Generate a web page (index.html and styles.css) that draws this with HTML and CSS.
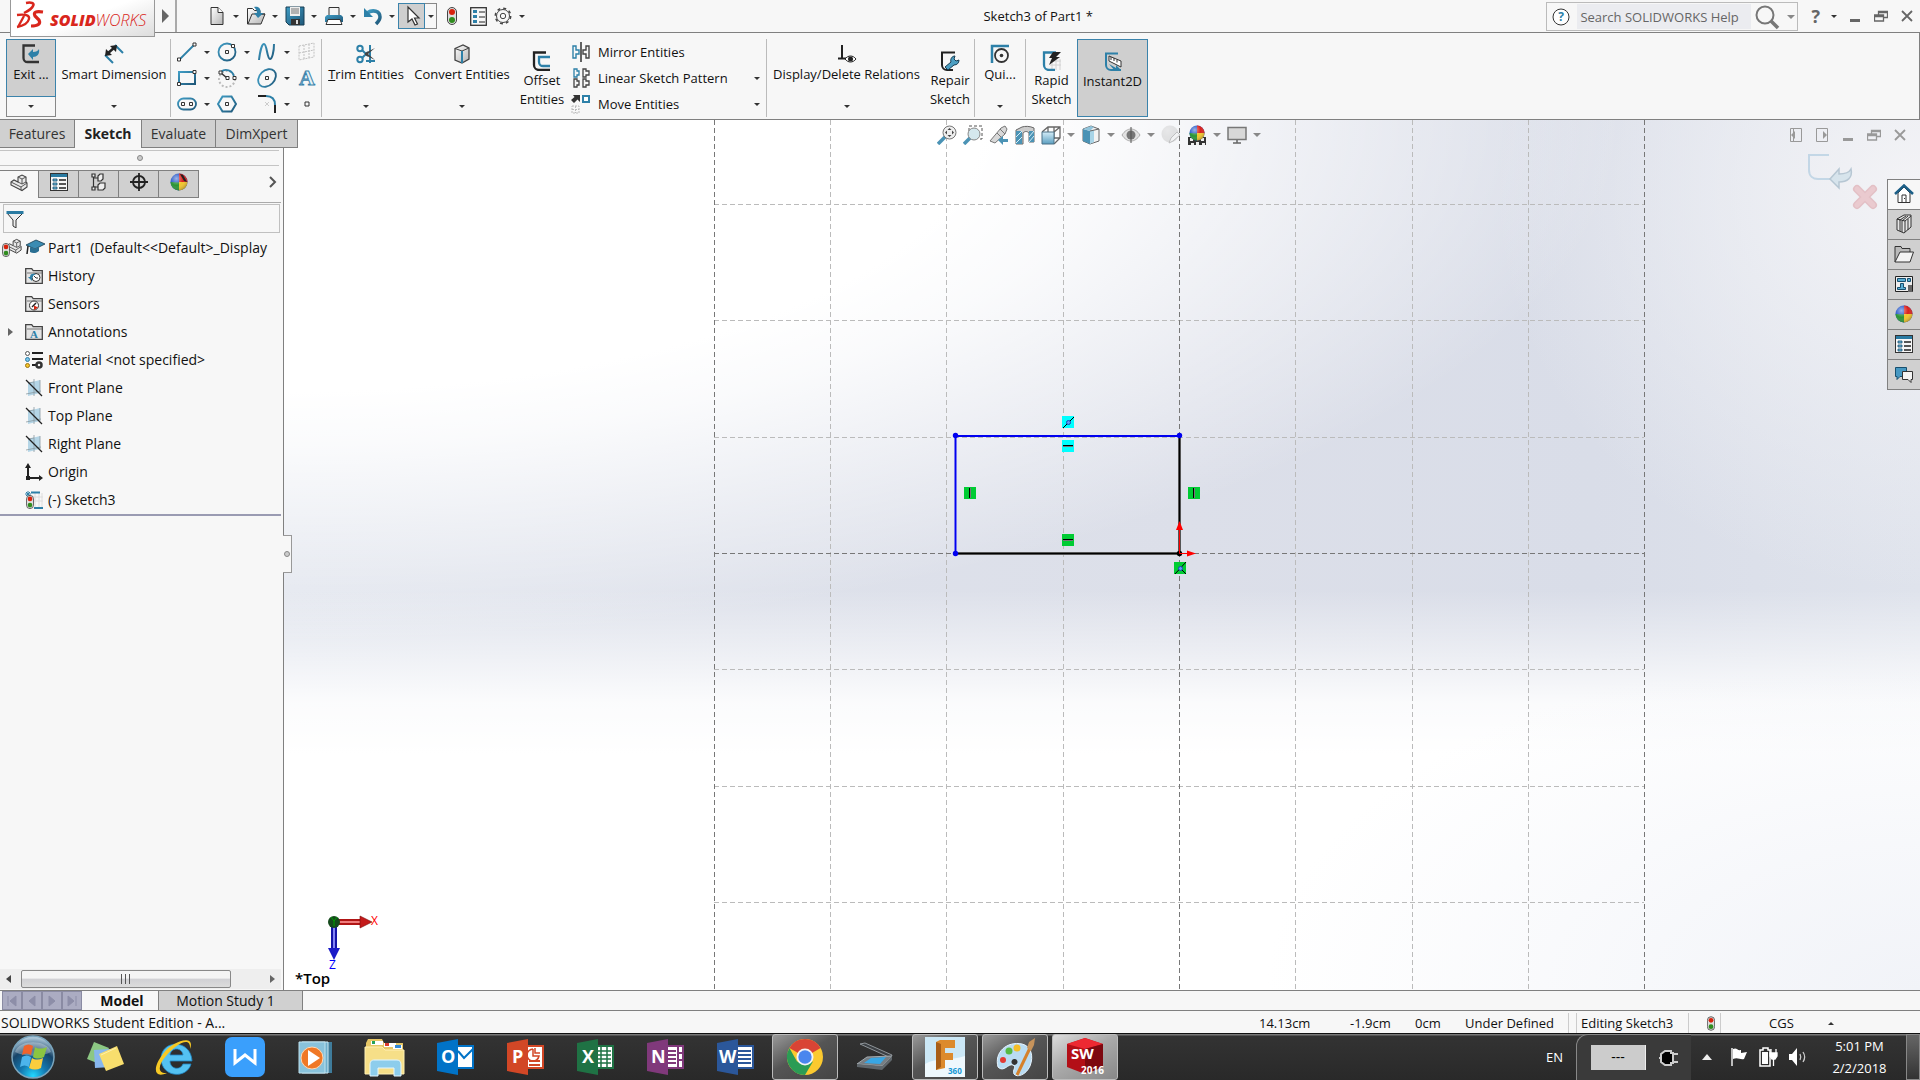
FILE: index.html
```html
<!DOCTYPE html>
<html lang="en">
<head>
    <meta charset="UTF-8">
    <meta name="viewport" content="width=device-width, initial-scale=1.0">
    <title>Sketch3 of Part1 *</title>
    <link rel="stylesheet" href="styles.css">
</head>
<body>
<!-- shared icons -->
<svg class="defs" aria-hidden="true">
    <defs>
        <linearGradient id="steel" x1="0" y1="0" x2="1" y2="1"><stop offset="0" stop-color="#3f9cc4"/><stop offset="1" stop-color="#1f587a"/></linearGradient>
        <linearGradient id="grey" x1="0" y1="0" x2="1" y2="1"><stop offset="0" stop-color="#ffffff"/><stop offset="1" stop-color="#b4b4b4"/></linearGradient>
        <linearGradient id="glass" x1="0" y1="0" x2="0" y2="1"><stop offset="0" stop-color="#d4edf8"/><stop offset="1" stop-color="#5b9fc0"/></linearGradient>
        <radialGradient id="orb" cx=".5" cy=".95" r=".9"><stop offset="0" stop-color="#22d8ff"/><stop offset=".35" stop-color="#1478b0"/><stop offset=".7" stop-color="#174468"/><stop offset="1" stop-color="#a9c4d6"/></radialGradient>
        <radialGradient id="shade" cx=".35" cy=".3" r=".8"><stop offset="0" stop-color="#fff" stop-opacity=".55"/><stop offset=".5" stop-color="#fff" stop-opacity="0"/><stop offset="1" stop-color="#000" stop-opacity=".35"/></radialGradient>
    </defs>
    <symbol id="i-traffic" viewBox="0 0 10 18"><rect x=".5" y=".5" width="9" height="17" rx="4.500" fill="#ddd" stroke="#444"/><circle cx="5" cy="5" r="3" fill="#d8230d"/><circle cx="5" cy="13" r="3" fill="#2f8c1e"/></symbol>
    <symbol id="i-list" viewBox="0 0 18 18"><rect x=".5" y=".5" width="17" height="17" fill="#f7f7f7" stroke="#333"/><path d="M1 1h16v3H1z" fill="#2a7ba2"/><path d="M3 6h4v2H3zM3 10h4v2H3zM3 14h4v2H3z" fill="#6db6d8" stroke="#174f6e" stroke-width=".8"/><path d="M9 7h7M9 11h7M9 15h7" stroke="#222" stroke-width="1.300"/></symbol>
    <symbol id="i-ball" viewBox="0 0 18 18"><circle cx="9" cy="9" r="8.500" fill="#2456c8"/><path d="M9 .5A8.500 8.500 0 0 1 17.500 9L9 9.500z" fill="#d8211d"/><path d="M17.500 9A8.500 8.500 0 0 1 9 17.500V9z" fill="#f2c52a"/><path d="M9 17.500A8.500 8.500 0 0 1 .5 9L9 9.500z" fill="#2a9435"/><circle cx="9" cy="9" r="8.500" fill="url(#shade)"/></symbol>
    <symbol id="i-folder" viewBox="0 0 18 18"><path d="M.7 16.300V1.700h6l1.500 2h9.100v12.600z" fill="#e4e4e4" stroke="#444" stroke-width="1.300"/><path d="M2 6h15" stroke="#777"/></symbol>
    <symbol id="i-plane" viewBox="0 0 18 18"><path d="M3 4l12-3v13L3 17z" fill="#b4d5e6"/><path d="M3 4l6-1M9 0v17M15 1v13M1 15l15-3" stroke="#8a9aa2" stroke-width=".8"/><path d="M1 1l16 16" stroke="#222" stroke-width="1.300"/></symbol>
    <symbol id="i-part" viewBox="0 0 18 18"><path d="M1 8l3-2 4 2V3l4-2 4 2v5l1 1v4l-5 3.500L1 11z" fill="#e9e9e9" stroke="#444" stroke-width="1.100"/><path d="M8 3l4 2 4-2M12 5v5l4-2M8 8l4 2M1 8l10 5 6-4M11 13v3" fill="none" stroke="#555"/></symbol>
    <symbol id="i-min" viewBox="0 0 14 14"><path d="M2 10h10v3H2z" fill="currentColor"/></symbol>
    <symbol id="i-restore" viewBox="0 0 14 14"><path d="M4.500 7V2.500h9v6H10M.5 6h9v6h-9zM4.500 3.500h9M.5 7.500h9" fill="none" stroke="currentColor" stroke-width="1.300"/></symbol>
    <symbol id="i-close" viewBox="0 0 14 14"><path d="M2 2l10 10M12 2L2 12" stroke="currentColor" stroke-width="1.800"/></symbol>
    <symbol id="i-office" viewBox="0 0 38 38"><path d="M20 8h17v22H20z" fill="#fff" stroke="currentColor" stroke-width="2"/><path d="M1 5L22 1v36L1 33z" fill="currentColor"/></symbol>
</svg>

<header class="titlebar">
    <div class="brand">
        <svg width="28" height="28" viewBox="0 0 28 28" fill="none" stroke="#d9261c"><path d="M10 2c5-1 9 0 7 3-1 3-5 5-9 7" stroke-width="2.500"/><path d="M1 14c8-1 13 0 12 4-1 4-6 7-12 8M8 15L2 26" stroke-width="2.300"/><path d="M27 11c-7-1-10 0-8 4l4 4c2 4-1 6-8 6" stroke-width="3.200"/></svg>
        <span class="brand-name"><b>SOLID</b>WORKS</span>
    </div>
    <button class="brand-more" aria-label="Show menus"><i class="tri-right"></i></button>
    <nav class="quick">
        <button aria-label="New"><svg width="18" height="20" viewBox="0 0 18 20"><path d="M3 1.500h7l5 5v12H3z" fill="url(#grey)" stroke="#333"/><path d="M10 1.500v5h5" fill="#fff" stroke="#333"/></svg></button><i class="caret"></i>
        <button aria-label="Open"><svg width="20" height="20" viewBox="0 0 20 20"><path d="M1.500 18V2.500h5l2 2H14V8h5l-4 10z" fill="url(#grey)" stroke="#333"/><path d="M2 18L6 8h13" fill="none" stroke="#333"/><path d="M8 1c5-1 7 2 6.500 6h3L12 12 8 7h3c0-2-1-4-3-6z" fill="#2d80a8"/></svg></button><i class="caret"></i>
        <button aria-label="Save"><svg width="20" height="20" viewBox="0 0 20 20"><path d="M1 1h18v18H4l-3-3z" fill="url(#steel)" stroke="#173d52"/><path d="M5 1h10v9H5z" fill="#eee"/><path d="M6 3h8M6 5h8M6 7h8" stroke="#777"/><path d="M6 13h9v6H6z" fill="#333"/><path d="M11 14h2v4h-2z" fill="#ddd"/></svg></button><i class="caret"></i>
        <button aria-label="Print"><svg width="20" height="20" viewBox="0 0 20 20"><path d="M5 9V1.500h10V9" fill="#f4f4f4" stroke="#333"/><path d="M1 11l2-2h14l2 2v5H1z" fill="url(#steel)"/><path d="M4 13.500h12l2 5H2z" fill="#fff" stroke="#333"/></svg></button><i class="caret"></i>
        <button aria-label="Undo"><svg width="20" height="20" viewBox="0 0 20 20"><path d="M4 7c6-4 13-2 13 4 0 3-2 5-4 7" fill="none" stroke="url(#steel)" stroke-width="3.500"/><path d="M1 2v9h9z" fill="#2d80a8"/></svg></button><i class="caret"></i>
        <button class="selected" aria-label="Select"><svg width="24" height="24" viewBox="0 0 24 24"><path d="M8 3v15l4-3 3 6 2.500-1-3-6h4.500z" fill="#fff" stroke="#333" stroke-width="1.200"/></svg></button><button class="drop" aria-label="Select options"><i class="caret"></i></button>
        <button class="wide" aria-label="Rebuild"><svg width="10" height="18"><use href="#i-traffic"/></svg></button>
        <button class="wide" aria-label="File properties"><svg width="17" height="19" viewBox="0 0 17 19"><rect x=".7" y=".7" width="15.600" height="17.600" fill="#f7f7f7" stroke="#333" stroke-width="1.300"/><path d="M3 3h4v3H3zM3 8h4v3H3zM3 13h4v3H3z" fill="#2d80a8"/><path d="M9 5h6M9 10h6M9 15h6" stroke="#222"/></svg></button>
        <button aria-label="Options"><svg width="18" height="18" viewBox="0 0 18 18" fill="none" stroke="#444"><circle cx="9" cy="9" r="7.700" stroke-width="1.500" stroke-dasharray="3 3.050"/><circle cx="9" cy="9" r="6.500"/><circle cx="9" cy="9" r="2.700"/></svg></button><i class="caret"></i>
    </nav>
    <h1 class="doc-title">Sketch3 of Part1 *</h1>
    <div class="search">
        <svg width="18" height="18" viewBox="0 0 18 18"><circle cx="9" cy="9" r="8" fill="#fff" stroke="#333"/><text x="9" y="13" text-anchor="middle" class="q-small">?</text></svg>
        <input type="text" placeholder="Search SOLIDWORKS Help" aria-label="Search SOLIDWORKS Help">
        <button aria-label="Search"><svg width="26" height="26" viewBox="0 0 26 26" fill="none" stroke="#777"><circle cx="11" cy="11" r="8.500" stroke-width="2"/><path d="M17 17l7 7" stroke-width="3.500"/></svg></button>
        <i class="caret pale"></i>
    </div>
    <div class="win-controls">
        <button class="help" aria-label="Help">?</button><i class="caret"></i>
        <button aria-label="Minimize"><svg width="14" height="14"><use href="#i-min"/></svg></button>
        <button aria-label="Restore"><svg width="14" height="14"><use href="#i-restore"/></svg></button>
        <button aria-label="Close"><svg width="14" height="14"><use href="#i-close"/></svg></button>
    </div>
</header>

<section class="ribbon">
    <div class="exit">
        <button class="exit-main"><svg width="20" height="20" viewBox="0 0 20 20"><path d="M14 1.500H2.500V14a4 4 0 0 0 4 4H18" fill="none" stroke="#333" stroke-width="2.300"/><path d="M7 10l5-5v3c3 0 5-1 6-3 1 5-2 8-6 8v3z" fill="#2d80a8"/></svg>Exit ...</button>
        <button class="exit-drop" aria-label="Exit options"><i class="caret"></i></button>
    </div>
    <button class="tool smart"><svg width="20" height="20" viewBox="0 0 20 20"><path d="M11 1l8 8M1 11l8 8" fill="none" stroke="#2d80a8" stroke-width="2"/><path d="M3 10l8-7" stroke="#222" stroke-width="2.500"/><path d="M1 12l1-7 6 6zM13 1L6 2l6 6z" fill="#222"/></svg>Smart Dimension<i class="caret"></i></button>
    <div class="sketch-tools">
        <button aria-label="Line"><svg width="20" height="20" viewBox="0 0 20 20" fill="#fff" stroke="#333"><path d="M3 17L17 3" stroke="#2d80a8" stroke-width="1.800"/><path d="M.5 16h3v3h-3zM16 1h3v3h-3z"/></svg></button><i class="caret"></i>
        <button aria-label="Circle"><svg width="20" height="20" viewBox="0 0 20 20" fill="none" stroke="#333"><circle cx="10" cy="10" r="8.500" stroke="url(#steel)" stroke-width="1.800"/><path d="M8.500 8.500h3v3h-3z"/><path d="M14.500 2.500h3v3h-3z" fill="#fff"/></svg></button><i class="caret"></i>
        <button aria-label="Spline"><svg width="20" height="20" viewBox="0 0 20 20" fill="none"><path d="M2 18C3 9 5 2 7 2c3 0 3 15 6 15 2 0 4-7 4-15" stroke="url(#steel)" stroke-width="2"/></svg></button><i class="caret"></i>
        <button aria-label="Sketch plane"><svg width="20" height="20" viewBox="0 0 20 20" fill="none" stroke="#c2c2c2" stroke-dasharray="2 1"><path d="M2 4l15-3v14L2 18zM7 3v14M12 2v14M2 11l15-3"/></svg></button>
        <button aria-label="Rectangle"><svg width="20" height="20" viewBox="0 0 20 20" fill="#fff" stroke="#333"><path d="M2 4h16v12H2z" fill="none" stroke="url(#steel)" stroke-width="2"/><path d="M.5 14.500h3v3h-3zM16 2.500h3v3h-3z"/></svg></button><i class="caret"></i>
        <button aria-label="Arc"><svg width="20" height="20" viewBox="0 0 20 20" fill="#fff" stroke="#333"><circle cx="10" cy="11" r="8" fill="none" stroke="#bbb" stroke-width="2" stroke-dasharray="2 2"/><path d="M4 4c4-4 12-2 13 5" fill="none" stroke="#2d80a8" stroke-width="1.800"/><path d="M4 5l6 5" stroke-width="1.500"/><path d="M2 3h3v3H2zM9 8.500h3v3H9zM16 8.500h3v3h-3z"/></svg></button><i class="caret"></i>
        <button aria-label="Ellipse"><svg width="20" height="20" viewBox="0 0 20 20" fill="none"><ellipse cx="10" cy="10" rx="10" ry="7.500" transform="rotate(-45 10 10)" stroke="url(#steel)" stroke-width="1.800"/><path d="M8.500 8.500h3v3h-3z" stroke="#333"/></svg></button><i class="caret"></i>
        <button class="letter" aria-label="Text">A</button>
        <button aria-label="Slot"><svg width="20" height="20" viewBox="0 0 20 20" fill="none"><rect x="1" y="4.500" width="18" height="11" rx="5.500" stroke="url(#steel)" stroke-width="1.800"/><path d="M4.500 8.500h3v3h-3zM12.500 8.500h3v3h-3z" stroke="#333"/></svg></button><i class="caret"></i>
        <button aria-label="Polygon"><svg width="20" height="20" viewBox="0 0 20 20" fill="none"><path d="M5.500 2.500h9L19 10l-4.500 7.500h-9L1 10z" stroke="url(#steel)" stroke-width="2"/><path d="M8.500 8.500h3v3h-3z" stroke="#333"/></svg></button><i></i>
        <button aria-label="Fillet"><svg width="20" height="20" viewBox="0 0 20 20" fill="none" stroke-width="2"><path d="M1 2h8M18 11v8" stroke="#222"/><path d="M9 2c6 0 9 3 9 9" stroke="#2d80a8"/><path d="M8 8l4 4M12 8l-4 4" stroke="#ccc" stroke-width="1"/></svg></button><i class="caret"></i>
        <button aria-label="Point"><svg width="20" height="20" viewBox="0 0 20 20"><path d="M8 8h4v4H8z" fill="none" stroke="#333"/></svg></button>
    </div>
    <button class="tool trim"><svg width="20" height="20" viewBox="0 0 20 20"><g fill="none" stroke="#2d80a8" stroke-width="2"><circle cx="4" cy="4.500" r="2.700"/><circle cx="4" cy="15.500" r="2.700"/><path d="M6 6l6 6M6 14l6-6M14 1v18M10 17h9"/></g><path d="M9 9l10-5-7 6 7 6-10-5z" fill="#444"/></svg><span><u>T</u>rim Entities</span><i class="caret"></i></button>
    <button class="tool convert"><svg width="20" height="20" viewBox="0 0 20 20"><path d="M3 4.500L11 1l6 3v11l-7 4-7-3z" fill="url(#grey)" stroke="#444" stroke-width="1.300"/><path d="M3 4.500L10 7l7-3" fill="none" stroke="#444"/><path d="M10 7v12" stroke="#2d80a8" stroke-width="2"/></svg>Convert Entities<i class="caret"></i></button>
    <button class="tool low offset"><svg width="20" height="20" viewBox="0 0 20 20" fill="none" stroke-width="2.300"><path d="M14 1.500H2V14a5 5 0 0 0 5 5h11" stroke="#222"/><path d="M18 6H7v5a4 4 0 0 0 4 4h7" stroke="#2d80a8"/></svg>Offset<br>Entities</button>
    <div class="stack">
        <button><svg width="20" height="20" viewBox="0 0 20 20" fill="none" stroke-width="1.400"><path d="M2 4h3v4h3v4H5v4H2z" stroke="#2d80a8"/><path d="M18 4h-3v4h-3v4h3v4h3z" stroke="#444"/><path d="M10 0v20" stroke="#222"/></svg>Mirror Entities</button>
        <button><svg width="20" height="20" viewBox="0 0 20 20" fill="none" stroke="#444" stroke-width="1.300"><path d="M3 1h3v2h2v4H6v2H3z" stroke="#2d80a8"/><path d="M12 1h3v2h3v4h-3v2h-3zM3 11h3v2h2v4H6v2H3zM12 11h3v2h3v4h-3v2h-3z"/></svg>Linear Sketch Pattern<i class="caret"></i></button>
        <button><svg width="20" height="20" viewBox="0 0 20 20"><path d="M2 1h7v7L6.500 5.500 3 9 0 6l3.500-3z" fill="#333"/><path d="M12 2h6v6h-6z" fill="#fff" stroke="#2d80a8" stroke-width="2"/><path d="M1 12h7v7H1zM1 15.500h7M4.500 12v7" fill="none" stroke="#bbb" stroke-dasharray="2 1"/></svg>Move Entities<i class="caret"></i></button>
    </div>
    <button class="tool display"><svg width="20" height="20" viewBox="0 0 20 20"><path d="M5 1v13M1 14.500h10" stroke="#222" stroke-width="2"/><path d="M8 15c3-4 8-4 11 0-3 4-8 4-11 0z" fill="#fff" stroke="#222"/><circle cx="13.500" cy="15" r="2.500" fill="#222"/></svg>Display/Delete Relations<i class="caret"></i></button>
    <button class="tool low repair"><svg width="20" height="20" viewBox="0 0 20 20"><path d="M15 1.500H2V14a5 5 0 0 0 5 5h6" fill="none" stroke="#222" stroke-width="2"/><path d="M5 16l6-5c-1-3 1-6 4-6l-1 3 2 2 3-1c0 3-2 5-5 5l-6 5z" fill="#4c9fc3" stroke="#173d52"/></svg>Repair<br>Sketch</button>
    <button class="tool quick-snaps"><svg width="20" height="20" viewBox="0 0 20 20" fill="none"><path d="M2 19V2h17" stroke="#2d80a8" stroke-width="2.500"/><circle cx="11.500" cy="11.500" r="6.500" stroke="#333" stroke-width="1.800"/><circle cx="11.500" cy="11.500" r="1.800" fill="#333"/></svg>Qui...<i class="caret"></i></button>
    <button class="tool low rapid"><svg width="20" height="20" viewBox="0 0 20 20"><path d="M8 10h11M8 14h11M10 8v11M14 8v11M18 8v11" stroke="#d2d2d2"/><path d="M14 1.500H2V14a5 5 0 0 0 5 5h6" fill="none" stroke="#2d80a8" stroke-width="2.300"/><path d="M11 1h8l-5 5h4L7 14l3-7H7z" fill="#222"/></svg>Rapid<br>Sketch</button>
    <button class="tool low instant"><svg width="20" height="20" viewBox="0 0 20 20"><path d="M15 1.500H3V13a5 5 0 0 0 5 5h10" fill="none" stroke="#2d80a8" stroke-width="2"/><path d="M6 4l12 5v6L6 9z" fill="#fff" stroke="#333"/><path d="M8 5v3M11 6v3M14 7.500v3" stroke="#333"/><path d="M6 12l7 4v-3l5 5-6 1" fill="#2d80a8"/></svg>Instant2D</button>
</section>

<main class="work">
    <aside class="side">
        <div class="cmd-tabs">
            <button class="t-features">Features</button><button class="active t-sketch">Sketch</button><button class="t-evaluate">Evaluate</button><button class="t-dim">DimXpert</button>
        </div>
        <div class="panel">
            <div class="grip"><i></i></div>
            <div class="panel-tabs">
                <button class="active" aria-label="Feature tree"><svg width="18" height="18"><use href="#i-part"/></svg></button>
                <button aria-label="Property manager"><svg width="18" height="18"><use href="#i-list"/></svg></button>
                <button aria-label="Configurations"><svg width="18" height="18" viewBox="0 0 18 18" fill="#eee" stroke="#333" stroke-width="1.200"><path d="M3.500 1v16M4 5h5M4 14h5" fill="none"/><path d="M2 1h3v3H2zM2 14h3v3H2z"/><path d="M8 3l2-2h3v5l-2 2H8zM8 12l2-2h5v5l-2 2H8z"/></svg></button>
                <button aria-label="DimXpert manager"><svg width="18" height="18" viewBox="0 0 18 18" fill="none" stroke="#222" stroke-width="1.800"><circle cx="9" cy="9" r="6"/><path d="M9 0v18M0 9h18"/></svg></button>
                <button aria-label="Display manager"><svg width="18" height="18" viewBox="0 0 18 18"><use href="#i-ball"/><path d="M10 1l3 1 4 7-3-1z" fill="#222"/></svg></button>
                <svg class="more" width="8" height="12" viewBox="0 0 8 12"><path d="M1 1l5 5-5 5" fill="none" stroke="#555" stroke-width="2"/></svg>
            </div>
            <div class="filter"><svg width="18" height="18" viewBox="0 0 18 18"><path d="M1 3l6 7v6l3 2v-8l7-7z" fill="#eee" stroke="#333"/><path d="M.5 1h17v3H.5z" fill="#2a7ba2"/></svg><input type="text" aria-label="Filter tree"></div>
            <ul class="tree">
                <li class="root"><svg width="20" height="20" viewBox="0 0 20 20"><use href="#i-part" x="4" y="0" width="16" height="17"/><use href="#i-traffic" x="0" y="5" width="8" height="14"/></svg><svg width="20" height="18" viewBox="0 0 20 18"><path d="M1 6l10-5 9 4-10 5z" fill="#3b8cb3" stroke="#173d52" stroke-width=".8"/><path d="M5 8v5c3 2 7 1 9-1V8l-4 2z" fill="#2a6f93"/><path d="M3 7l-1 8" stroke="#222" stroke-width="1.500"/></svg>Part1 &nbsp;(Default&lt;&lt;Default&gt;_Display</li>
                <li><svg width="18" height="18" viewBox="0 0 18 18"><use href="#i-folder"/><circle cx="11" cy="10.500" r="4" fill="#fff" stroke="#333"/><path d="M9 9l2 2h2" fill="none" stroke="#333"/><path d="M3 10l4 4c0-4 1-6 4-7-4-1-6 0-6 3z" fill="#2d80a8"/></svg>History</li>
                <li><svg width="18" height="18" viewBox="0 0 18 18"><use href="#i-folder"/><circle cx="9" cy="10.500" r="4.500" fill="#fff" stroke="#333"/><path d="M9 10.500l4 2-4 2.500z" fill="#d8230d"/><path d="M7 12l4-4" stroke="#222" stroke-width="1.500"/></svg>Sensors</li>
                <li class="branch"><i class="tri-right small"></i><svg width="18" height="18" viewBox="0 0 18 18"><use href="#i-folder"/><text x="9" y="15" text-anchor="middle" class="a-small">A</text></svg>Annotations</li>
                <li><svg width="18" height="18" viewBox="0 0 18 18"><path d="M7 2h11M7 8h11M7 14h5" stroke="#222" stroke-width="2"/><circle cx="2.500" cy="2.500" r="2" fill="#fff" stroke="#555"/><circle cx="2.500" cy="8.500" r="2" fill="#7cc4ea" stroke="#2d80a8"/><circle cx="2.500" cy="14.500" r="2" fill="#f5c52b" stroke="#9b7410"/><circle cx="14" cy="14" r="2.500" fill="none" stroke="#333" stroke-width="2.500"/></svg>Material &lt;not specified&gt;</li>
                <li><svg width="18" height="18"><use href="#i-plane"/></svg>Front Plane</li>
                <li><svg width="18" height="18"><use href="#i-plane"/></svg>Top Plane</li>
                <li><svg width="18" height="18"><use href="#i-plane"/></svg>Right Plane</li>
                <li><svg width="18" height="18" viewBox="0 0 18 18"><path d="M3 3v12h13" fill="none" stroke="#222" stroke-width="2"/><path d="M0 5l3-5 3 5zM14 12l4 3-4 3z" fill="#222"/><path d="M1 13h4v4H1z" fill="#222"/></svg>Origin</li>
                <li><svg width="18" height="18" viewBox="0 0 18 18"><path d="M8 6h10M8 10h10M10 2v14M14 2v14M17 2v14" stroke="#ddd"/><path d="M6 1.500h9M9 17h9" stroke="#2d80a8" stroke-width="2"/><path d="M3 0v6M0 3h6M1 1l4 4M5 1L1 5" stroke="#2d80a8"/><use href="#i-traffic" x="1" y="4" width="8" height="14"/></svg>(-) Sketch3</li>
            </ul>
            <div class="hscroll"><i class="tri-left small"></i><div class="thumb"><svg width="12" height="10" viewBox="0 0 12 10"><path d="M1.500 0v10M5.500 0v10M9.500 0v10" stroke="#555"/></svg></div><i class="tri-right small"></i></div>
        </div>
    </aside>

    <section class="canvas">
        <svg class="drawing" viewBox="284 120 1636 870" preserveAspectRatio="xMidYMin meet">
            <g class="grid-light">
                <path d="M830.500 120v870M946.500 120v870M1063.500 120v870M1295.500 120v870M1412.500 120v870M1528.500 120v870"/>
                <path d="M714 204.500h930M714 320.500h930M714 437.500h930M714 669.500h930M714 786.500h930M714 902.500h930"/>
            </g>
            <path class="grid-dark" d="M714.500 120v870M1179.500 120v870M1644.500 120v870M714 553.500h930"/>
            <!-- rectangle sketch -->
            <path d="M955 553.500h224.500V436" fill="none" stroke="#555" stroke-width="3"/>
            <path d="M955 553.500h224.500V436" fill="none" stroke="#000"/>
            <path d="M955.500 553V436" stroke="#7777f0" stroke-width="3"/>
            <path d="M955.500 553V436" stroke="#0000f0"/>
            <path d="M955 436h224" stroke="#0000f0" stroke-width="2"/>
            <g fill="#0000f0"><circle cx="955.500" cy="435.500" r="2.700"/><circle cx="1179.500" cy="435.500" r="2.700"/><circle cx="955.500" cy="553.500" r="2.700"/></g>
            <circle cx="1179.500" cy="553.500" r="2.700"/>
            <path d="M1179.500 553.500V528M1179.500 553.500H1190" stroke="#f00"/>
            <path d="M1176 530l3.500-9 3.500 9zM1187 550.500l9 3-9 3z" fill="#f00"/>
            <!-- relation badges -->
            <g fill="#0ff"><path d="M1062 416h12v12h-12zM1062 440h12v12h-12z"/></g>
            <g fill="#00cc33"><path d="M964 487h12v12h-12zM1188 487h12v12h-12zM1062 534h12v12h-12zM1174 562h12v12h-12z"/></g>
            <g stroke="#777"><path d="M1063 446.500h10M970.500 488v10M1194.500 488v10M1063 540.500h10"/></g>
            <g stroke="#000"><path d="M1063 445.500h10M969.500 488v10M1193.500 488v10M1063 539.500h10M1063 428l11-11M1175 574l11-12M1180 568l6 6"/></g>
            <g fill="#5f9cf5" stroke="#1c45b5"><circle cx="1068.500" cy="422.500" r="2"/><circle cx="1180.500" cy="568.500" r="2"/></g>
            <!-- triad -->
            <path d="M334 919h26v6h-26z" fill="#b01515"/><path d="M338 922h23" stroke="#f07c7c" stroke-width="2"/><path d="M360 916l12 6-12 6z" fill="#c41a1a" stroke="#7d0c0c" stroke-width=".6"/>
            <path d="M331 922h6v27h-6z" fill="#1414a8"/><path d="M334 925v24" stroke="#8484f5" stroke-width="2"/><path d="M328 948h12l-6 12z" fill="#1b1bc8"/>
            <circle cx="334" cy="922" r="6" fill="#154a1d"/><path d="M331 917l3 4 3-4M334 921v5" fill="none" stroke="#00a000"/>
            <text x="371" y="925" class="axis-x">X</text>
            <text x="329" y="969" class="axis-z">Z</text>
            <text x="295" y="984" class="view-name">*Top</text>
            <!-- confirmation corner -->
            <g opacity=".75"><path d="M1829 155h-20v15c0 6 4 9 9 9h12" fill="none" stroke="#b5cfe2" stroke-width="2"/><path d="M1830 179l9-10v5c6 0 10-1 12-5 2 9-4 13-12 13v6z" fill="#cfe0ea" stroke="#a4b9c8" stroke-width="1.500"/><path d="M1857 189l16 16M1873 189l-16 16" stroke="#dfb0b6" stroke-width="8" stroke-linecap="round"/><path d="M1857 189l16 16M1873 189l-16 16" stroke="#e8bec3" stroke-width="5" stroke-linecap="round"/></g>
        </svg>
        <div class="view-bar">
            <svg width="20" height="20" viewBox="0 0 20 20"><path d="M1 19l7-7" stroke="#4b93b5" stroke-width="3.500"/><circle cx="12.500" cy="7.500" r="6.500" fill="#eee" stroke="#777"/><path d="M12.500 3l2 2h-4zM12.500 12l2-2h-4zM8 7.500l2-2v4zM17 7.500l-2-2v4z" fill="#444"/></svg>
            <svg width="20" height="20" viewBox="0 0 20 20"><path d="M1 19l7-7" stroke="#4b93b5" stroke-width="3.500"/><path d="M6 6V1h13v13h-4" fill="none" stroke="#555" stroke-dasharray="3 2"/><circle cx="11" cy="9" r="6" fill="#d5e8ee" stroke="#888"/></svg>
            <svg width="20" height="20" viewBox="0 0 20 20"><path d="M1 16L12 3l4-2 2 3-2 5L6 18z" fill="#d8d8d8" stroke="#777"/><path d="M8 8l4 4M11 4l5 5" stroke="#777"/><path d="M9 15l5-4v3h5v3h-5v3z" fill="#4b93b5"/></svg>
            <svg width="20" height="20" viewBox="0 0 20 20"><path d="M1 5l6-3c3-1 8-1 12 1v14h-5V8c-2-2-4-2-6 0v11H1z" fill="#ccc" stroke="#666"/><path d="M1 6h6v13H1zM14 6h5v11h-5z" fill="#4b93b5"/><path d="M1 12l6-6M1 18l6-6M14 12l5-6M14 17l5-6" stroke="#d4edf8"/></svg>
            <svg width="20" height="20" viewBox="0 0 20 20"><path d="M1 7l6-5h12v11l-6 6M13 7l6-5M7 2v5M13 2v12M13 13h6" fill="none" stroke="#666" stroke-width="1.300"/><path d="M1 7h12v12H1z" fill="url(#glass)" stroke="#4a7187"/></svg><i class="caret pale"></i>
            <svg width="20" height="20" viewBox="0 0 20 20"><path d="M2 4l8-3 8 3v12l-9 3-7-3z" fill="#f2f2f2" stroke="#666"/><path d="M2 4l7 2v13l-7-3z" fill="#4b93b5"/><path d="M2 4l8-3 3 1-4 4z" fill="#91c4db"/><path d="M9 6l4-1v12l-4 2z" fill="#a8d4e7"/><path d="M9 6l9-2" stroke="#666"/></svg><i class="caret pale"></i>
            <svg width="20" height="20" viewBox="0 0 20 20"><path d="M1 10c5-8 13-8 18 0-5 8-13 8-18 0z" fill="#e2e2e2" stroke="#aaa"/><circle cx="10" cy="10" r="4.500" fill="#777"/><path d="M10 2v16" stroke="#555"/></svg><i class="caret pale"></i>
            <svg class="faded" width="20" height="20" viewBox="0 0 20 20"><circle cx="9" cy="9" r="8.500" fill="#ccc"/><circle cx="9" cy="9" r="8.500" fill="url(#shade)" opacity=".5"/><path d="M8 18l2-5 6-6 3 3-7 6z" fill="#eee" stroke="#888"/></svg>
            <svg width="20" height="20" viewBox="0 0 20 20"><path d="M1 12h18v8H1z" fill="#333"/><path d="M3 13h3v3H3zM9 17h3v3H9zM14 13h3v3h-3zM4 18h3v2H4zM15 18h3v2h-3z" fill="#eee"/><use href="#i-ball" x="2" y="0" width="16" height="16"/></svg><i class="caret pale"></i>
            <svg width="20" height="20" viewBox="0 0 20 20"><path d="M1 2.500h18v12H1z" fill="#d8d8d8" stroke="#777" stroke-width="1.500"/><path d="M10 15v3M6 18h8" stroke="#666" stroke-width="1.500"/></svg><i class="caret pale"></i>
        </div>
        <div class="doc-controls">
            <button aria-label="Collapse left"><svg width="14" height="14" viewBox="0 0 14 14"><path d="M1.500.5h11v13h-11zM4.500 0v14" fill="none" stroke="currentColor"/><path d="M6 3v8L2 7z" fill="currentColor"/></svg></button>
            <button aria-label="Collapse right"><svg width="14" height="14" viewBox="0 0 14 14"><path d="M1.500.5h11v13h-11z" fill="none" stroke="currentColor"/><path d="M8 3v8l4-4z" fill="currentColor"/></svg></button>
            <button aria-label="Minimize document"><svg width="14" height="14"><use href="#i-min"/></svg></button>
            <button aria-label="Restore document"><svg width="14" height="14"><use href="#i-restore"/></svg></button>
            <button aria-label="Close document"><svg width="14" height="14"><use href="#i-close"/></svg></button>
        </div>
        <div class="task-pane">
            <button class="active" aria-label="Resources"><svg width="20" height="20" viewBox="0 0 20 20"><path d="M4 9v9.500h12V9l-6-6z" fill="#fff" stroke="#333"/><path d="M8 18v-7h4v7M10.500 14v1" fill="none" stroke="#333"/><path d="M1 10l9-8.500 9 8.500" fill="none" stroke="#1c5f87" stroke-width="2.500"/></svg></button>
            <button aria-label="Design library"><svg width="20" height="20" viewBox="0 0 20 20"><path d="M3 5l7-4h7v12l-7 6-7-3z" fill="#e6e6e6" stroke="#333"/><path d="M3 5l3 1v11M6 6l6-4M8 7l6-5M11 7l6-5M8 7v11M11 7v11M14 5v11M3 5l8 2" fill="none" stroke="#333"/></svg></button>
            <button aria-label="File explorer"><svg width="20" height="20" viewBox="0 0 20 20"><path d="M1 18V2.500h6l1 2h8V8" fill="#bbb" stroke="#333"/><path d="M1 18L6 8h13.500L16 18z" fill="#f4f4f4" stroke="#333"/></svg></button>
            <button aria-label="View palette"><svg width="20" height="20" viewBox="0 0 20 20"><path d="M1.500 2.500h17v15h-17z" fill="#eee" stroke="#222"/><path d="M3.500 4.500h8v3h-8zM13.500 4.500h3v3h-3zM6.500 9.500h3v4h2v2h-8v-2h3z" fill="#5aaed4" stroke="#174f6e"/><path d="M14 11h4v7h-4z" fill="#666"/></svg></button>
            <button aria-label="Appearances"><svg width="18" height="18"><use href="#i-ball"/></svg></button>
            <button aria-label="Custom properties"><svg width="18" height="18"><use href="#i-list"/></svg></button>
            <button aria-label="Forum"><svg width="20" height="20" viewBox="0 0 20 20"><path d="M1.500 3.500h11v9H6l-3 3v-3H1.500z" fill="#4698c2" stroke="#174f6e"/><path d="M8.500 7.500h10v8H17v3l-3-3H8.500z" fill="#f4f4f4" stroke="#333"/></svg></button>
        </div>
        <button class="splitter" aria-label="Collapse panel"><i></i></button>
    </section>
</main>

<nav class="model-tabs">
    <div class="nav-buttons">
        <button aria-label="First"><svg width="12" height="12" viewBox="0 0 12 12"><path d="M2 1v10M10 1v10L4 6z"/></svg></button>
        <button aria-label="Previous"><svg width="12" height="12" viewBox="0 0 12 12"><path d="M9 1v10L3 6z"/></svg></button>
        <button aria-label="Next"><svg width="12" height="12" viewBox="0 0 12 12"><path d="M3 1v10l6-5z"/></svg></button>
        <button aria-label="Last"><svg width="12" height="12" viewBox="0 0 12 12"><path d="M10 1v10M2 1v10l6-5z"/></svg></button>
    </div>
    <button class="model">Model</button><button class="motion">Motion Study 1</button>
</nav>

<footer class="status">
    <span class="edition">SOLIDWORKS Student Edition - A...</span>
    <span class="s-x">14.13cm</span><span class="s-y">-1.9cm</span><span class="s-z">0cm</span><span class="s-def">Under Defined</span>
    <span class="s-edit">Editing Sketch3</span>
    <span class="s-light"><svg width="8" height="15"><use href="#i-traffic"/></svg></span>
    <span class="s-units">CGS</span><span class="s-up"><i class="caret-up"></i></span>
</footer>

<div class="taskbar">
    <button class="start" aria-label="Start"><svg width="44" height="44" viewBox="0 0 44 44"><circle cx="22" cy="22" r="21" fill="url(#orb)" stroke="#7aa5bd" stroke-width="1.500"/><path d="M4 17C8 4 36 4 40 17 30 22 14 22 4 17z" fill="#fff" opacity=".3"/><path d="M13 11c3-2 6-2 9 0l-2 9c-3-2-6-2-9 0z" fill="#f0642c"/><path d="M24 12c3 2 7 2 12 0l-3 10c-4 2-8 2-11 0z" fill="#8bc541"/><path d="M11 22c3-2 6-2 9 0l-2 10c-3-2-6-2-9 0z" fill="#4cb4ec"/><path d="M21 23c3 2 7 2 11 0l-2 10c-4 2-8 2-12 0z" fill="#fbcd3e"/></svg></button>
    <button aria-label="Sticky Notes"><svg width="40" height="40" viewBox="0 0 40 40"><path d="M9 5l15 6-7 17L2 22z" fill="#8cc783"/><path d="M9 13l16-1 1 18-16 1z" fill="#87b6ed"/><path d="M14 17l18-8 7 18-18 7z" fill="#f8de6d"/><path d="M16 18l15-7" stroke="#fff0a9"/></svg></button>
    <button aria-label="Internet Explorer"><svg width="42" height="42" viewBox="0 0 42 42"><path d="M37 28C33 43 8 42 7 23 7 3 37 3 38 25H16c0 8 10 10 13 3zM16 19h13c-1-8-12-8-13 0z" fill="#54c2f2" fill-rule="evenodd" stroke="#1f86c5" stroke-width=".8"/><path d="M36 13C42-2 19 4 9 18-2 32 0 43 13 37 3 38 4 29 12 20 23 7 37 0 36 13z" fill="#f7c925"/></svg></button>
    <button aria-label="WPS Writer"><svg width="40" height="40" viewBox="0 0 40 40"><rect width="40" height="40" rx="7" fill="#3a9ffc"/><path d="M10 12v14l10-8 10 8V12" fill="none" stroke="#fff" stroke-width="3"/></svg></button>
    <button aria-label="Media Player"><svg width="40" height="40" viewBox="0 0 40 40"><path d="M10 5h27v31H10z" fill="#3f7c9b"/><path d="M7 5h26v31H7z" fill="#6eafcc" stroke="#cde8f3"/><path d="M4 5h26v31H4z" fill="#89c3dc" stroke="#bfe2ef"/><circle cx="17" cy="21" r="11" fill="#f07826" stroke="#ffd9b5"/><path d="M13 13v16l12-8z" fill="#fff"/></svg></button>
    <button aria-label="Explorer"><svg width="42" height="40" viewBox="0 0 42 40"><path d="M2 6l2-4h14l2 4h19v31H2z" fill="#e7c766"/><path d="M7 4h12v4H7zM20 6h12v4H20zM29 8h9v4h-9z" fill="#fff"/><path d="M8 4h3v3H8z" fill="#25a35a"/><path d="M21 6h4v3h-4z" fill="#db3b2d"/><path d="M31 8h6v3h-6z" fill="#3289d6"/><path d="M1 10h17l3 3h19v24H1z" fill="#f6df88" stroke="#fff0b4"/><path d="M6 39V28c0-4 2-5 4-5h23c3 0 4 2 4 5v11h-7v-8H14v8z" fill="#8dcdec" stroke="#e3f6ff"/></svg></button>
    <button class="outlook" aria-label="Outlook"><svg width="38" height="38" viewBox="0 0 38 38"><use href="#i-office"/><path d="M22 13l6 7 9-9" fill="none" stroke="currentColor" stroke-width="2"/><text x="5" y="25">O</text></svg></button>
    <button class="powerpoint" aria-label="PowerPoint"><svg width="38" height="38" viewBox="0 0 38 38"><use href="#i-office"/><path d="M23 23h11M23 27h11" stroke="currentColor" stroke-width="2"/><path d="M27 11v7h6a6 6 0 1 1-6-7M29 10v5h5" fill="none" stroke="currentColor" stroke-width="1.500"/><text x="6" y="25">P</text></svg></button>
    <button class="excel" aria-label="Excel"><svg width="38" height="38" viewBox="0 0 38 38"><use href="#i-office"/><path d="M22 13h13M22 17h13M22 21h13M22 25h13M25 9v20M31 9v20" stroke="currentColor" stroke-width="1.500"/><text x="6" y="25">X</text></svg></button>
    <button class="onenote" aria-label="OneNote"><svg width="38" height="38" viewBox="0 0 38 38"><use href="#i-office"/><path d="M22 13h8M22 17h8M22 21h8M22 25h8M32 9v20M32 15h5M32 22h5" stroke="currentColor" stroke-width="2"/><text x="5" y="25">N</text></svg></button>
    <button class="word" aria-label="Word"><svg width="38" height="38" viewBox="0 0 38 38"><use href="#i-office"/><path d="M22 13h13M22 17h13M22 21h13M22 25h13" stroke="currentColor" stroke-width="2"/><text x="3" y="25">W</text></svg></button>
    <button class="open" aria-label="Chrome"><svg width="38" height="38" viewBox="0 0 38 38"><circle cx="19" cy="19" r="18" fill="#fbc92f"/><path d="M19 19L3.400 10A18 18 0 0 1 34.600 10z" fill="#d94435"/><path d="M3.400 10A18 18 0 0 0 19 37l8-13.500-8 3-8-3z" fill="#2b9c55"/><circle cx="19" cy="19" r="8.500" fill="#f4f4f4"/><circle cx="19" cy="19" r="6.700" fill="#4a86ee"/></svg></button>
    <button aria-label="Scanner"><svg width="40" height="40" viewBox="0 0 40 40"><path d="M5 7l5-1 27 12-1 3z" fill="#3c4044" stroke="#8f959a"/><path d="M2 27l10-7 25-1-10 10z" fill="#777e83" stroke="#a3aaaf"/><path d="M9 26l7-5 15-1-6 7z" fill="#38a6e4"/><path d="M2 27l25 2 10-10v4L27 33 2 30z" fill="#5f666b"/></svg></button>
    <button class="open" aria-label="Fusion 360"><svg width="40" height="40" viewBox="0 0 40 40"><path d="M0 0h40v40H0z" fill="#cbe7f5"/><path d="M0 27c12-7 25-3 40-8v21H0z" fill="#eef8fd"/><path d="M11 5l4-2h15v8H20v5h8v7h-8v8l-9 2z" fill="#dc8a2c"/><path d="M11 5l5 2v23l-5 3z" fill="#a85e17"/><text x="23" y="37" class="cad">360</text></svg></button>
    <button class="open" aria-label="Paint"><svg width="40" height="40" viewBox="0 0 40 40"><path d="M3 30C-1 15 12 4 27 7c9 2 12 12 8 22-4 9-13 12-16 8-2-4 3-7-1-9-5-2-9 8-15 2z" fill="#b9dcf3" stroke="#e7f5ff"/><circle cx="8" cy="23" r="3" fill="#e33b35"/><circle cx="14" cy="14" r="3.500" fill="#58b945"/><circle cx="22" cy="11" r="3.500" fill="#f4bd26"/><path d="M19 22a3 3 0 1 0 1 0" fill="#333"/><path d="M22 38L35 11" stroke="#d5812b" stroke-width="3"/><path d="M32 11l2-6 6-4-1 7-3 6z" fill="#c6935b"/></svg></button>
    <button class="open current" aria-label="SOLIDWORKS 2016"><svg width="42" height="42" viewBox="0 0 42 42"><path d="M3 8L21 2l18 6v23l-18 7-18-7z" fill="#b30f17"/><path d="M3 8L21 2l18 6-18 5z" fill="#ed2932"/><path d="M21 13l18-5v23l-18 7z" fill="#7d0810"/><text x="7" y="23" class="sw">SW</text><text x="17" y="38" class="year">2016</text></svg></button>
    <div class="tray">
        <span class="lang">EN</span>
        <div class="battery"><span class="cell">---</span><svg width="22" height="18" viewBox="0 0 22 18"><path d="M1 9h2V5l4-3h6v2h2v10h-2v2H7l-4-3V9M15 5h5M15 13h5" fill="#000" stroke="#ccc" stroke-width="2"/></svg></div>
        <i class="caret-up light"></i>
        <svg class="flag" width="18" height="20" viewBox="0 0 18 20"><path d="M2 1v18" stroke="#eee" stroke-width="1.500"/><path d="M3 2c4-2 4 2 8 1v3l6-1-3 7c-4 1-6-2-11 0z" fill="#fff"/></svg>
        <svg width="20" height="20" viewBox="0 0 20 20"><path d="M2 3h3V1h5v2h2v16H2z" fill="none" stroke="#fff" stroke-width="1.500"/><path d="M4 5h6v12H4z" fill="#fff"/><path d="M13 2v5M18 2v5M12 6h7v3l-2 3h-3l-2-3zM15.500 11v8" fill="#fff" stroke="#fff" stroke-width="1.300"/></svg>
        <svg width="20" height="20" viewBox="0 0 20 20"><path d="M1 7h3l5-6v18l-5-6H1z" fill="#fff"/><path d="M12 7c1 2 1 4 0 6M15 5c2 3 2 7 0 10" fill="none" stroke="#ccc" stroke-width="1.300"/></svg>
        <div class="clock">5:01 PM<br>2/2/2018</div>
        <button class="show-desktop" aria-label="Show desktop"></button>
    </div>
</div>
</body>
</html>
```
FILE: styles.css
```css
*{
    box-sizing: border-box;
}
body{
    margin: 0;
    height: 100vh;
    display: flex;
    flex-direction: column;
    overflow: hidden;
    background: #f7f7f7;
    color: #111;
    font: 13px/20px "Open Sans", "Noto Sans", sans-serif;
}
button{
    margin: 0;
    padding: 0;
    border: 0;
    background: none;
    color: inherit;
    font: inherit;
    display: flex;
    align-items: center;
    justify-content: center;
}
input{
    font: inherit;
    border: 0;
    padding: 0;
    min-width: 0;
    background: none;
}
svg{
    display: block;
    flex: none;
}
.defs{
    position: absolute;
    width: 0;
    height: 0;
}

/* small triangles */
.caret, .caret-up, .tri-right, .tri-left{
    display: block;
    flex: none;
    width: 0;
    height: 0;
    border: 3px solid transparent;
    border-bottom-width: 0;
    border-top-color: #333;
}
.caret.pale{
    border-top-color: #888;
}
.caret-up{
    border-bottom: 3px solid #333;
    border-top: 0;
}
.caret-up.light{
    border-width: 0 5px 6px;
    border-bottom-color: #eee;
}
.tri-right{
    border: 7px solid transparent;
    border-left-color: #666;
    border-right: 0;
}
.tri-left{
    border: 7px solid transparent;
    border-right-color: #444;
    border-left: 0;
}
.tri-right.small{
    border-width: 4px 0 4px 5px;
}
.tri-left.small{
    border-width: 4px 5px 4px 0;
}

/* title bar */
.titlebar{
    height: 33px;
    flex: none;
    display: flex;
    border-bottom: 1px solid #808080;
}
.brand{
    z-index: 1;
    height: 37px;
    width: 145px;
    margin-left: 10px;
    padding: 0 0 6px 5px;
    display: flex;
    align-items: center;
    gap: 6px;
    border: 1px solid #999;
    border-top: 0;
    background: linear-gradient(160deg, #fff 50%, #ddd);
    color: #d9261c;
}
.brand-name{
    font: italic 300 16px/20px "Open Sans", sans-serif;
    padding-top: 9px;
}
.brand-name b{
    font-weight: 800;
}
.brand-more{
    width: 22px;
    border-right: 2px solid #aaa;
}
.quick{
    display: flex;
    align-items: center;
    margin-left: 28px;
}
.quick > button{
    width: 24px;
    height: 26px;
}
.quick > .caret{
    margin: 0 5px 0 4px;
}
.quick > .selected{
    width: 27px;
    margin-left: -2px;
    background: #cfcfcf;
    border: 1px solid #3b83ab;
}
.quick > .drop{
    width: 12px;
    border: 1px solid #888;
    border-left: 0;
    margin-right: 2px;
}
.quick > .wide{
    width: 26px;
}
.doc-title{
    flex: 1;
    margin: 0;
    font-size: 13px;
    font-weight: normal;
    line-height: 33px;
    text-align: center;
}
.search{
    width: 252px;
    height: 29px;
    margin-top: 2px;
    padding-left: 5px;
    display: flex;
    align-items: center;
    gap: 7px;
    border: 1px solid #bbb;
}
.search input{
    width: 174px;
    height: 25px;
    padding-left: 3px;
    background: #ebecf0;
}
.search input::placeholder{
    color: #666;
    opacity: 1;
}
.search button{
    margin-left: -4px;
}
.search .caret, .view-bar .caret{
    border-width: 4px 4px 0;
}
.q-small{
    font: bold 12px "Open Sans", sans-serif;
    fill: #2d80a8;
}
.win-controls{
    display: flex;
    align-items: center;
    gap: 11px;
    padding: 0 6px 0 13px;
    color: #666;
}
.win-controls .help{
    font-size: 18px;
    font-weight: bold;
}
.win-controls button + button{
    width: 15px;
}

/* ribbon */
.ribbon{
    height: 87px;
    flex: none;
    display: flex;
    padding: 6px 0 2px 6px;
    border-bottom: 1px solid #808080;
    border-right: 1px solid #808080;
}
.exit{
    width: 50px;
    margin-right: 2px;
}
.exit-main{
    width: 50px;
    height: 58px;
    flex-direction: column;
    justify-content: flex-start;
    padding-top: 4px;
    background: #cfcfcf;
    border: 1px solid #3b83ab;
}
.exit-drop{
    width: 50px;
    height: 20px;
    border: 1px solid #888;
    border-top: 0;
}
.tool{
    flex-direction: column;
    justify-content: flex-start;
    padding-top: 5px;
    white-space: nowrap;
}
.tool .caret{
    margin-top: 21px;
}
.tool.low{
    padding-top: 12px;
    line-height: 19px;
}
.smart{
    width: 112px;
}
.sketch-tools{
    width: 152px;
    padding: 0 0 0 6px;
    display: grid;
    grid-template-columns: 20px 20px 20px 20px 20px 20px 20px;
    grid-template-rows: 26px 26px 26px;
    align-items: center;
    border-left: 1px solid #bbb;
    border-right: 1px solid #bbb;
}
.sketch-tools .caret{
    justify-self: center;
}
.letter{
    font: bold 22px/22px "Liberation Serif", serif;
    color: #e4f1f7;
    -webkit-text-stroke: 1px #3b83ab;
}
.trim{
    width: 88px;
}
.convert{
    width: 104px;
}
.offset{
    width: 56px;
}
.stack{
    width: 197px;
    padding-left: 1px;
    display: grid;
    grid-template-rows: 26px 26px 26px;
    border-right: 1px solid #bbb;
}
.stack button{
    justify-content: flex-start;
    gap: 7px;
    padding-right: 6px;
}
.stack .caret{
    margin-left: auto;
}
.display{
    width: 159px;
}
.repair{
    width: 49px;
    border-right: 1px solid #bbb;
}
.quick-snaps{
    width: 51px;
    border-right: 1px solid #bbb;
}
.rapid{
    width: 51px;
}
.instant{
    width: 71px;
    background: #cfcfcf;
    border: 1px solid #3b83ab;
}

/* work area */
.work{
    flex: 1;
    min-height: 0;
    display: flex;
}
.side{
    width: 284px;
    flex: none;
    display: flex;
    flex-direction: column;
}
.cmd-tabs{
    position: relative;
    z-index: 2;
    display: flex;
    height: 28px;
    width: max-content;
}
.cmd-tabs button{
    background: #d0d0d0;
    border: 1px solid #808080;
    border-width: 0 1px 1px 0;
    font-size: 14px;
    color: #333;
}
.cmd-tabs .active{
    background: #f7f7f7;
    border-bottom: 0;
    font-weight: bold;
    color: #222;
}
.t-features{
    width: 75px;
}
.t-sketch{
    width: 67px;
}
.t-evaluate{
    width: 74px;
}
.t-dim{
    width: 82px;
}
.panel{
    flex: 1;
    min-height: 0;
    display: flex;
    flex-direction: column;
    border-right: 1px solid #808080;
}
.grip{
    height: 16px;
    margin: 2px 4px 4px 0;
    display: flex;
    align-items: center;
    justify-content: center;
    border: 1px solid #c4c4c4;
    border-width: 1px 0;
}
.grip i, .splitter i{
    width: 6px;
    height: 6px;
    border-radius: 50%;
    border: 1px solid #888;
    background: #ccc;
}
.panel-tabs{
    height: 33px;
    margin-right: 2px;
    display: flex;
    align-items: flex-start;
    border-bottom: 1px solid #aaa;
}
.panel-tabs button{
    width: 40px;
    height: 28px;
    padding-bottom: 4px;
    background: #d0d0d0;
    border: 1px solid #808080;
    border-left: 0;
}
.panel-tabs .active{
    width: 39px;
    background: none;
    border-bottom: 0;
}
.panel-tabs .more{
    margin: 6px 4px 0 auto;
}
.filter{
    height: 29px;
    margin: 1px 3px;
    padding-left: 2px;
    display: flex;
    align-items: center;
    border: 1px solid #c0c0c0;
}
.filter input{
    flex: 1;
}
.tree{
    margin: 0 2px 0 0;
    padding: 0;
    list-style: none;
    overflow: hidden;
    border-bottom: 2px solid #9a9bb2;
}
.tree li{
    height: 28px;
    padding-left: 25px;
    display: flex;
    align-items: center;
    gap: 5px;
    font-size: 14px;
    white-space: nowrap;
}
.tree .root{
    padding-left: 2px;
    gap: 3px;
}
.tree .branch{
    padding-left: 8px;
}
.tree .branch svg{
    margin-left: 7px;
}
.a-small{
    font: bold 11px "Liberation Serif", serif;
    fill: #2d80a8;
}
.hscroll{
    height: 20px;
    margin: auto 2px 1px 0;
    padding: 0 6px;
    display: flex;
    align-items: center;
    background: #eee;
}
.thumb{
    width: 210px;
    height: 18px;
    margin: 0 auto 0 10px;
    display: flex;
    align-items: center;
    justify-content: center;
    border: 1px solid #888;
    border-radius: 2px;
    background: linear-gradient(#f4f4f4 45%, #d0d0d4 50%, #dcdcdc);
}

/* graphics area */
.canvas{
    position: relative;
    flex: 1;
    min-width: 0;
    background:
        radial-gradient(ellipse 40% 40% at 100% 100%, rgba(241,243,248,1), rgba(241,243,248,0)),
        linear-gradient(to bottom, rgba(255,255,255,0) 54%, rgba(255,255,255,.45) 61%, rgba(255,255,255,.88) 67%, #fff 73%),
        radial-gradient(ellipse 82% 60% at 0% 0%, #fff 52%, rgba(255,255,255,.85) 62%, rgba(255,255,255,.4) 82%, rgba(255,255,255,0) 100%),
        radial-gradient(ellipse 26% 46% at 100% 8%, rgba(243,243,246,1), rgba(240,241,245,.7) 40%, rgba(240,241,245,0)),
        linear-gradient(to right, #e0e4ed, #dcdfe9 55%, #d9dde8 80%, #dfe3ec);
}
.drawing{
    width: 100%;
    height: 100%;
}
.grid-light{
    stroke: #bbb;
    stroke-dasharray: 5 3;
}
.grid-dark{
    stroke: #777;
    stroke-dasharray: 5 3;
}
.axis-x{
    font: 12px "Open Sans", sans-serif;
    fill: #f00;
}
.axis-z{
    font: 12px "Open Sans", sans-serif;
    fill: #00f;
}
.view-name{
    font: 600 15px "Open Sans", sans-serif;
}
.view-bar{
    position: absolute;
    top: 5px;
    left: 0;
    right: 0;
    display: flex;
    align-items: center;
    justify-content: center;
    gap: 6px;
    padding-right: 7px;
}
.view-bar .faded{
    opacity: .5;
}
.doc-controls{
    position: absolute;
    top: 8px;
    right: 13px;
    display: flex;
    gap: 12px;
    color: #999;
}
.task-pane{
    position: absolute;
    top: 59px;
    right: 0;
    width: 33px;
    border: 1px solid #808080;
    border-right: 0;
}
.task-pane button{
    width: 32px;
    height: 30px;
    padding-bottom: 2px;
    background: #d0d0d0;
    border-bottom: 1px solid #808080;
}
.task-pane button:last-child{
    height: 29px;
    border-bottom: 0;
}
.task-pane .active{
    background: #f7f7f7;
}
.splitter{
    position: absolute;
    left: -1px;
    top: 415px;
    width: 9px;
    height: 38px;
    border: 1px solid #999;
    border-left: 0;
    background: #f7f7f7;
}

/* model tabs and status line */
.model-tabs{
    height: 20px;
    flex: none;
    display: flex;
    border-top: 1px solid #808080;
    font-size: 14px;
}
.nav-buttons{
    display: flex;
    margin-left: 2px;
}
.nav-buttons button{
    width: 20px;
    border: 1px solid #8a8ba3;
    background: #abacc2;
}
.nav-buttons svg{
    fill: #8d8ea8;
    stroke: #8d8ea8;
}
.model{
    width: 76px;
    padding-left: 4px;
    font-weight: bold;
}
.motion{
    width: 145px;
    padding-right: 10px;
    background: #d0d0d0;
    border: 1px solid #808080;
    border-width: 0 1px;
}
.status{
    height: 23px;
    flex: none;
    display: flex;
    align-items: center;
    padding: 2px 0 0 1px;
    border-top: 1px solid #808080;
    white-space: nowrap;
}
.status .edition{
    margin-right: auto;
    font-size: 14px;
}
.s-x{
    width: 91px;
}
.s-y{
    width: 65px;
}
.s-z{
    width: 50px;
}
.s-def{
    width: 104px;
    margin-right: 7px;
    border-right: 1px solid #ccc;
}
.s-edit{
    width: 113px;
    padding-left: 4px;
    border-left: 1px solid #ccc;
    border-right: 1px solid #ccc;
}
.s-light{
    width: 32px;
    padding-left: 12px;
    display: flex;
    justify-content: center;
    align-items: center;
    height: 20px;
    border-right: 1px solid #ccc;
}
.s-units{
    width: 107px;
    padding-left: 48px;
}
.s-up{
    width: 92px;
}

/* taskbar */
.taskbar{
    height: 47px;
    flex: none;
    display: flex;
    gap: 4px;
    border-top: 1px solid #111;
    background: linear-gradient(to bottom, #777 0, #777 1px, #333 2px, #292929);
    color: #fff;
}
.taskbar > button{
    width: 66px;
}
.taskbar > .start{
    width: 68px;
    padding-right: 2px;
}
.taskbar > .open{
    border: 1px solid #bbb;
    border-radius: 3px;
    background: linear-gradient(150deg, #999, #555 45%, #444);
}
.taskbar > .current{
    background: linear-gradient(150deg, #ddd, #aaa 45%, #888);
}
.taskbar text{
    font: bold 18px "Open Sans", sans-serif;
    fill: #fff;
}
.taskbar .cad{
    font-size: 8px;
    fill: #1697d4;
}
.taskbar .sw{
    font-size: 15px;
}
.taskbar .year{
    font-size: 10px;
}
.outlook{
    color: #0173c7;
}
.powerpoint{
    color: #d24726;
}
.excel{
    color: #1f7244;
}
.onenote{
    color: #80397b;
}
.word{
    color: #2b579a;
}
.tray{
    margin-left: auto;
    display: flex;
    align-items: center;
}
.lang{
    margin-right: 13px;
}
.battery{
    width: 115px;
    height: 46px;
    margin-right: 11px;
    padding-left: 14px;
    display: flex;
    align-items: center;
    gap: 12px;
    border-left: 1px solid #888;
    border-top: 1px solid #888;
    border-radius: 12px 0 0 0;
    background: #3a3a3a;
}
.cell{
    width: 55px;
    height: 25px;
    background: #ccc;
    border-right: 1px solid #eee;
    color: #000;
    font-size: 14px;
    line-height: 24px;
    text-align: center;
}
.tray > svg{
    margin-left: 10px;
}
.tray > .flag{
    margin-left: 18px;
}
.clock{
    width: 98px;
    padding-left: 5px;
    line-height: 22px;
    text-align: center;
}
.show-desktop{
    width: 14px;
    height: 46px;
    border: 1px solid #888;
    background: linear-gradient(#666, #333);
}
```
